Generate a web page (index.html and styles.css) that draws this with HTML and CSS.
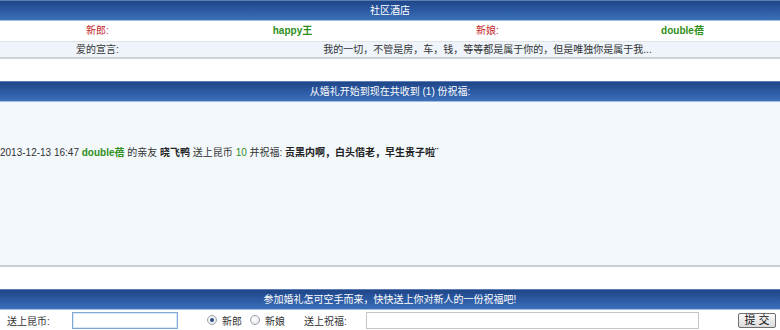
FILE: index.html
```html
<!DOCTYPE html>
<html>
<head>
<meta charset="utf-8">
<link rel="stylesheet" href="styles.css">
</head>
<body>
<section class="block block-top">
  <div class="bar">社区酒店</div>
  <div class="row couple">
    <div class="cell red">新郎:</div>
    <div class="cell green b">happy王</div>
    <div class="cell red">新娘:</div>
    <div class="cell green b">double蓓</div>
  </div>
  <div class="row vow">
    <div class="cell">爱的宣言:</div>
    <div class="cell wide">我的一切，不管是房，车，钱，等等都是属于你的，但是唯独你是属于我...</div>
  </div>
</section>

<section class="block block-mid">
  <div class="bar">从婚礼开始到现在共收到 (1) 份祝福:</div>
  <div class="wishes">
    <p class="wish">2013-12-13 16:47 <b class="green">double蓓</b> 的亲友 <b>晓飞鸭</b> 送上昆币 <span class="green">10</span> 并祝福: <b>贡黑内啊，白头偕老，早生贵子啦¨</b></p>
  </div>
</section>

<section class="block block-form">
  <div class="bar">参加婚礼怎可空手而来，快快送上你对新人的一份祝福吧!</div>
  <form class="form">
    <label class="lbl first">送上昆币:</label>
    <span class="input coin"></span>
    <span class="radio on"></span><span class="opt">新郎</span>
    <span class="radio"></span><span class="opt">新娘</span>
    <label class="lbl second">送上祝福:</label>
    <span class="input msg"></span>
    <span class="btn">提 交</span>
  </form>
</section>
</body>
</html>
```

FILE: styles.css
```css
html, body {
  margin: 0;
  padding: 0;
  background: #fff;
}
body {
  font-family: "Liberation Sans", "Noto Sans CJK SC", sans-serif;
  font-size: 10px;
  color: #333;
  width: 780px;
  overflow: hidden;
}
.bar {
  height: 21px;
  line-height: 20px;
  text-align: center;
  color: #fff;
  background: linear-gradient(#1f4688, #2e5ea8 60%, #3d70b8);
  border-top: 1px solid #5d7fb5;
  border-bottom: 1px solid #9fc0e4;
  box-sizing: border-box;
}
.row {
  display: flex;
}
.cell {
  width: 195px;
  text-align: center;
}
.cell.wide {
  width: 585px;
}
.couple {
  height: 20px;
  line-height: 20px;
  background: #fff;
  border-bottom: 1px solid #dfe4ea;
}
.vow {
  height: 15px;
  line-height: 15px;
  background: #eef4fa;
  border-bottom: 2px solid #cdd2d7;
}
.red { color: #c4262b; }
.green { color: #2f8f1a; }
.b { font-weight: bold; }
b { font-weight: bold; color: #222; }
b.green { color: #2f8f1a; }

.block-top { margin-bottom: 22px; }
.block-mid { margin-bottom: 22px; }

.wishes {
  height: 163px;
  background: #f3f8fc;
  border-bottom: 2px solid #c9ced3;
  display: flex;
  align-items: flex-start;
}
.wish {
  margin: 44px 0 0 0;
  line-height: 14px;
}

.form {
  display: flex;
  align-items: center;
  height: 20px;
  margin: 0;
}
.lbl.first { margin-left: 7px; width: 65px; }
.input {
  display: block;
  background: #fff;
  box-sizing: border-box;
}
.input.coin {
  width: 106px;
  height: 17px;
  border: 1px solid #7ea9d5;
  box-shadow: inset 0 0 0 1px #d9e7f5;
  margin-right: 29px;
}
.radio {
  width: 10px;
  height: 10px;
  border-radius: 50%;
  border: 1px solid #9aa3ac;
  background: radial-gradient(circle at 40% 40%, #fff, #dde2e8);
  box-sizing: border-box;
  position: relative;
  margin-right: 5px;
}
.radio.on::after {
  content: "";
  position: absolute;
  left: 2px;
  top: 2px;
  width: 4px;
  height: 4px;
  border-radius: 50%;
  background: #2d4f80;
}
.opt { margin-right: 8px; }
.lbl.second { margin-left: 11px; width: 62px; }
.input.msg {
  width: 333px;
  height: 17px;
  border: 1px solid #c2c6cb;
  margin-right: 39px;
}
.btn {
  display: block;
  width: 38px;
  height: 15px;
  line-height: 13px;
  text-align: center;
  border: 1px solid #6f6f6f;
  border-radius: 2px;
  background: linear-gradient(#fafafa, #dcdcdc);
  box-sizing: border-box;
  color: #111;
  font-size: 11px;
}
```
